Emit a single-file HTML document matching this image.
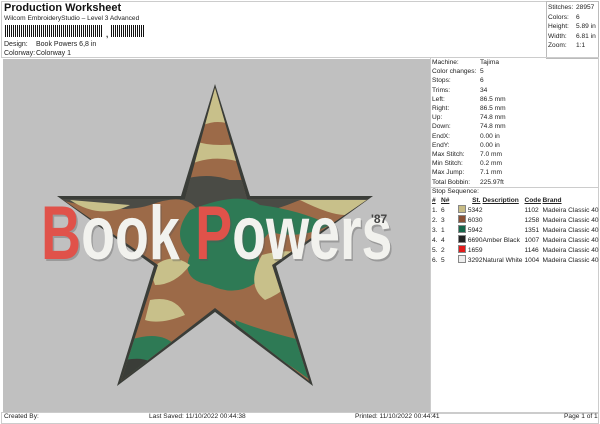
<!DOCTYPE html>
<html><head><meta charset="utf-8"><style>
body{margin:0;width:600px;height:424px;background:#fff;font-family:"Liberation Sans",Arial,sans-serif;font-size:7px;color:#222;position:relative;overflow:hidden}
.a{position:absolute;white-space:nowrap}
.box{position:absolute;border:1px solid #bbb}
table{border-collapse:collapse;font-size:6.6px}
td{padding:0;height:9px;line-height:9px}
</style></head><body>
<div class="box" style="left:1px;top:1px;width:596px;height:55px;border-color:#ccc"></div>
<div class="a" style="left:4px;top:2px;font-size:11px;font-weight:bold;color:#111">Production Worksheet</div>
<div class="a" style="left:4px;top:15px;font-size:6.6px">Wilcom EmbroideryStudio – Level 3 Advanced</div>
<div class="a" style="left:5px;top:25px;width:97px;height:12px;background:repeating-linear-gradient(90deg,#111 0 1px,#fff 1px 2px,#111 2px 3px,#fff 3px 4px)"></div>
<div class="a" style="left:106px;top:30px;font-size:8px;font-weight:bold">,</div>
<div class="a" style="left:111px;top:25px;width:33px;height:12px;background:repeating-linear-gradient(90deg,#111 0 1px,#fff 1px 2px,#111 2px 3px,#fff 3px 4px)"></div>
<div class="a" style="left:4px;top:41px">Design:</div><div class="a" style="left:36px;top:41px">Book Powers 6,8 in</div>
<div class="a" style="left:4px;top:50px">Colorway:</div><div class="a" style="left:36px;top:50px">Colorway 1</div>
<div class="box" style="left:546px;top:1px;width:51px;height:56px"></div>
<div class="a" style="left:548px;top:3px;line-height:9.5px;font-size:6.6px">Stitches:<br>Colors:<br>Height:<br>Width:<br>Zoom:</div>
<div class="a" style="left:576px;top:3px;line-height:9.5px;font-size:6.6px">28957<br>6<br>5.89 in<br>6.81 in<br>1:1</div>
<div class="a" style="left:3px;top:59px;width:427px;height:353px;background:#c0c0c0"></div>
<svg class="a" style="left:0;top:0" width="430" height="424" viewBox="0 0 430 424">
<defs><clipPath id="st"><polygon points="215,88 247,199 368,199 272,265 309,381 215,308 121,381 158,265 62,199 185,199"/></clipPath></defs>
<polygon points="215,84 250,196 373,196 276,266 313,386 215,312 117,386 154,266 57,196 181,196" fill="#3a3d38"/>
<g clip-path="url(#st)">
<rect x="0" y="0" width="430" height="424" fill="#9c6a48"/>
<path d="M195,130 Q215,115 240,128 L245,110 L215,85 L190,110Z" fill="#c8c08a"/>
<path d="M180,170 Q210,150 250,165 L255,140 Q220,150 190,140Z" fill="#c8c08a"/>
<path d="M180,180 Q215,170 240,185 L250,200 L180,200Z" fill="#4a4b45"/>
<path d="M60,200 Q120,215 150,205 Q190,190 200,215 Q240,225 300,200 L370,200 L370,180 L60,180Z" fill="#4a4b45"/>
<path d="M190,210 Q240,190 260,205 Q300,210 330,225 Q300,240 270,232 Q250,250 265,275 Q240,300 210,285 Q180,280 190,255 Q170,235 190,210Z" fill="#2e7a55"/>
<path d="M300,200 Q330,215 345,215 L370,200Z" fill="#c8c08a"/>
<path d="M262,255 Q300,245 310,262 Q290,290 265,300 Q245,285 262,255Z" fill="#c8c08a"/>
<path d="M150,270 Q170,250 190,265 Q175,285 155,285Z" fill="#c8c08a"/>
<path d="M150,300 Q175,295 185,315 Q160,325 145,320Z" fill="#c8c08a"/>
<path d="M130,340 Q160,330 175,345 Q150,365 125,375Z" fill="#2e7a55"/>
<path d="M235,320 Q260,330 300,340 L310,380 Q270,350 240,340Z" fill="#2e7a55"/>
<path d="M125,360 Q150,355 160,370 L120,385Z" fill="#3a3d38"/>
<path d="M70,200 Q100,220 130,205Z" fill="#c8c08a"/>
</g>
<g font-family="Liberation Sans,Arial,sans-serif" font-weight="bold" font-size="76" transform="translate(41,259) scale(0.73,1)">
<text x="2" y="2" fill="#555" opacity=".35">Book Powers</text>
<text x="0" y="0"><tspan fill="#e0524a">B</tspan><tspan fill="#f2f2ee">ook </tspan><tspan fill="#e0524a">P</tspan><tspan fill="#f2f2ee">owers</tspan></text>
</g>
<text x="371" y="223" font-family="Liberation Sans,Arial,sans-serif" font-weight="bold" font-size="12" fill="#444">'87</text>
</svg>
<div class="box" style="left:430px;top:57px;width:167px;height:355px;border-color:#ccc"></div>
<div class="a" style="left:432px;top:58px;line-height:9.2px;font-size:6.6px">Machine:<br>Color changes:<br>Stops:<br>Trims:<br>Left:<br>Right:<br>Up:<br>Down:<br>EndX:<br>EndY:<br>Max Stitch:<br>Min Stitch:<br>Max Jump:<br>Total Bobbin:<br>Stop Sequence:</div>
<div class="a" style="left:480px;top:58px;line-height:9.2px;font-size:6.6px">Tajima<br>5<br>6<br>34<br>86.5 mm<br>86.5 mm<br>74.8 mm<br>74.8 mm<br>0.00 in<br>0.00 in<br>7.0 mm<br>0.2 mm<br>7.1 mm<br>225.97ft</div>
<div class="a" style="left:430px;top:187px;width:168px;border-top:1px solid #ccc"></div>
<div class="a" style="left:432px;top:196px;line-height:9.2px">
<table>
<tr style="font-weight:bold;text-decoration:underline"><td style="width:9px">#</td><td style="width:17px">N#</td><td style="width:22px;text-align:right;padding-right:2px">St.</td><td style="width:42px">Description</td><td style="width:18px">Code</td><td>Brand</td></tr>
<tr><td>1.</td><td>6</td><td><span style="display:inline-block;width:6px;height:6px;background:#c8bc85;border:1px solid #888;vertical-align:-1px"></span> 5342</td><td></td><td>1102</td><td>Madeira Classic 40</td></tr>
<tr><td>2.</td><td>3</td><td><span style="display:inline-block;width:6px;height:6px;background:#8a5035;border:1px solid #888;vertical-align:-1px"></span> 6030</td><td></td><td>1258</td><td>Madeira Classic 40</td></tr>
<tr><td>3.</td><td>1</td><td><span style="display:inline-block;width:6px;height:6px;background:#15664a;border:1px solid #888;vertical-align:-1px"></span> 5942</td><td></td><td>1351</td><td>Madeira Classic 40</td></tr>
<tr><td>4.</td><td>4</td><td><span style="display:inline-block;width:6px;height:6px;background:#222;border:1px solid #888;vertical-align:-1px"></span> 6690</td><td>Amber Black</td><td>1007</td><td>Madeira Classic 40</td></tr>
<tr><td>5.</td><td>2</td><td><span style="display:inline-block;width:6px;height:6px;background:#e21a1a;border:1px solid #888;vertical-align:-1px"></span> 1659</td><td></td><td>1146</td><td>Madeira Classic 40</td></tr>
<tr><td>6.</td><td>5</td><td><span style="display:inline-block;width:6px;height:6px;background:#eee;border:1px solid #888;vertical-align:-1px"></span> 3292</td><td>Natural White</td><td>1004</td><td>Madeira Classic 40</td></tr>
</table></div>
<div class="box" style="left:1px;top:412px;width:596px;height:10px;border-color:#ccc"></div>
<div class="a" style="left:4px;top:413px;font-size:6.6px">Created By:</div>
<div class="a" style="left:149px;top:413px;font-size:6.6px">Last Saved: 11/10/2022 00:44:38</div>
<div class="a" style="left:355px;top:413px;font-size:6.6px">Printed: 11/10/2022 00:44:41</div>
<div class="a" style="left:564px;top:413px;font-size:6.6px">Page 1 of 1</div>
</body></html>
